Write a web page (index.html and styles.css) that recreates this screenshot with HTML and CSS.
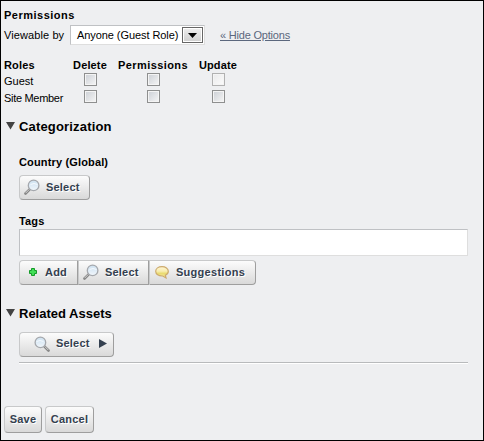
FILE: index.html
```html
<!DOCTYPE html>
<html lang="en">
<head>
<meta charset="utf-8">
<title>Permissions</title>
<link rel="stylesheet" href="styles.css">
</head>
<body>
<svg width="0" height="0" class="defs">
  <defs>
    <linearGradient id="lens" x1="0" y1="0" x2="0" y2="1"><stop offset="0" stop-color="#cfe2f0"/><stop offset=".5" stop-color="#deebf6"/><stop offset="1" stop-color="#f2f7fb"/></linearGradient>
    <linearGradient id="bubble" x1="0" y1="0" x2="0" y2="1"><stop offset="0" stop-color="#fff5d4"/><stop offset=".4" stop-color="#f8edb0"/><stop offset=".6" stop-color="#eadb70"/><stop offset="1" stop-color="#f7efa8"/></linearGradient>
    <symbol id="magnifier" viewBox="0 0 16 16">
      <path d="M6.2 9.8 1.5 14.5" stroke="#858585" stroke-width="2.6" stroke-linecap="round"/>
      <path d="M5.4 10.3 1.6 14.1" stroke="#d5d5d5" stroke-width="1"/>
      <circle cx="9.6" cy="6.4" r="5.3" fill="url(#lens)" stroke="#a5a8ad" stroke-width="1.3"/>
      <path d="M6.5 5.5q3.5-2 7 0" stroke="#f5faff" fill="none"/>
    </symbol>
  </defs>
</svg>
<form class="panel">
  <h2 class="label permissions"><span>Permissions</span></h2>
  <div class="viewable">
    <span class="by">Viewable by</span>
    <div class="select"><span>Anyone (Guest Role)</span><i class="drop"><svg width="9" height="5"><path d="M0 0h9L4.5 5z"/></svg></i></div>
    <a class="hide">« Hide Options</a>
  </div>
  <div class="roles">
    <b class="t-roles">Roles</b><b class="t-delete">Delete</b><b class="t-perm">Permissions</b><b class="t-update">Update</b>
    <span class="t-guest">Guest</span><i class="check"></i><i class="check"></i><i class="check disabled"></i>
    <span class="t-member">Site Member</span><i class="check"></i><i class="check"></i><i class="check"></i>
  </div>
  <h3 class="section categorization"><svg width="9" height="8"><path d="M0 0h9L4.5 7.5z"/></svg><span>Categorization</span></h3>
  <div class="content">
    <h4 class="label country"><span>Country (Global)</span></h4>
    <div class="button pick"><svg class="icon"><use href="#magnifier"/></svg><span class="t-select">Select</span></div>
    <h4 class="label tags"><span>Tags</span></h4>
    <div class="field"></div>
    <div class="toolbar">
      <div class="button add"><svg class="plus" width="8" height="8" viewBox="0 0 8 8"><path d="M2.5.5h3v2h2v3h-2v2h-3v-2h-2v-3h2z" fill="#42df57" stroke="#159a28"/></svg><span class="t-add">Add</span></div>
      <div class="button find"><svg class="icon"><use href="#magnifier"/></svg><span class="t-select">Select</span></div>
      <div class="button suggest"><svg class="bubble" width="14" height="13" viewBox="0 0 14 13"><path d="M7 .7c3.5 0 6.3 1.8 6.3 4.6 0 2.1-1.3 3.3-3 3.9l.7 2.7L7.8 10C3.5 10.2.7 8.2.7 5.3.7 2.5 3.5.7 7 .7z" fill="url(#bubble)" stroke="#ccaa6c" stroke-width="1.2"/></svg><span class="t-suggest">Suggestions</span></div>
    </div>
  </div>
  <h3 class="section related"><svg width="9" height="8"><path d="M0 0h9L4.5 7.5z"/></svg><span>Related Assets</span></h3>
  <div class="content assets">
    <div class="button menu"><svg class="icon mirrored"><use href="#magnifier"/></svg><span class="t-select">Select</span><svg class="arrow" width="8" height="9"><path d="M0 0v9L8 4.5z"/></svg></div>
  </div>
  <div class="actions"><div class="button save"><span>Save</span></div><div class="button cancel"><span>Cancel</span></div></div>
</form>
</body>
</html>
```

FILE: styles.css
```css
* { box-sizing: border-box; }
body { margin: 0; font: 11px/14px "Liberation Sans", Arial, sans-serif; color: #000; }
.defs { display: block; }
.panel { display: flex; flex-direction: column; width: 484px; height: 441px; border: 1px solid #000; background: #eeeff1; white-space: nowrap; }
h2, h3, h4 { margin: 0; font-weight: bold; }
.label { font-size: 11px; line-height: 14px; letter-spacing: .15px; }
.permissions { margin: 7px 0 0 3px; letter-spacing: .5px; }
.viewable { display: flex; align-items: center; height: 20px; margin: 3px 0 0 3px; }
.by { width: 66px; letter-spacing: .1px; }
.select { display: flex; align-items: center; justify-content: space-between; width: 135px; height: 20px; padding: 0 1px 0 6px; border: 1px solid #bfc1c4; border-right-color: #dedede; border-bottom-color: #dedede; background: #fff; letter-spacing: -.07px; }
.drop { display: flex; align-items: center; justify-content: center; width: 21px; height: 16px; border: 1px solid #666; box-shadow: inset 0 0 0 1px #fff; background: linear-gradient(#eee, #cfcfcf); }
.hide { margin-left: 15px; color: #5b677d; text-decoration: underline; letter-spacing: -.2px; }
.roles { display: grid; grid-template-columns: 53px 66px 60px 70px; grid-template-rows: 14px 17px 17px; align-items: center; justify-items: center; margin: 12px 0 0 3px; }
.roles b { letter-spacing: .15px; padding-top: 2px; }
.roles .t-perm { letter-spacing: .4px; }
.roles > :nth-child(4n+1) { justify-self: start; }
.t-guest, .t-member { padding-top: 2px; }
.t-member { letter-spacing: -.3px; }
.check { width: 13px; height: 13px; border: 1px solid #8e8f8f; box-shadow: inset 0 0 0 1px #f4f4f4; background: linear-gradient(135deg, #cbcfd5, #f6f6f6); }
.disabled { border-color: #b1b1b1; background: linear-gradient(135deg, #e9e9ea, #fcfcfc); }
.section { display: flex; align-items: center; height: 18px; padding-left: 5px; font-size: 13px; line-height: 18px; }
.section svg { width: 9px; margin: 0 4px 2px 0; fill: #434343; }
.categorization { margin-top: 13px; letter-spacing: .17px; }
.content { margin-left: 18px; }
.country { margin-top: 19px; }
.button { display: flex; align-items: center; height: 25px; border: 1px solid; border-color: #c8c9ca #9e9e9e #9e9e9e #c8c9ca; border-radius: 4px; background: linear-gradient(#fcfcfc, #d9d9d9); color: #34404f; font-weight: bold; text-shadow: 1px 1px #fff; padding-bottom: 2px; letter-spacing: .2px; }
.icon { width: 16px; height: 16px; flex: none; margin-top: 1px; }
.pick { width: 71px; margin-top: 6px; padding-left: 4px; }
.t-select { margin-left: 6px; }
.tags { margin-top: 14px; }
.field { width: 449px; height: 27px; margin-top: 1px; border: 1px solid #bfc1c4; border-right-color: #dedede; border-bottom-color: #dedede; background: #fff; }
.toolbar { display: flex; margin-top: 4px; }
.toolbar .button { border-radius: 0; }
.toolbar .add { width: 59px; padding-left: 9px; border-radius: 4px 0 0 4px; }
.t-add { margin-left: 8px; }
.toolbar .find { width: 71px; padding-left: 4px; }
.toolbar .suggest { width: 107px; padding-left: 5px; border-radius: 0 4px 4px 0; }
.bubble { margin-top: 2px; }
.t-suggest { margin-left: 7px; letter-spacing: .28px; }
.related { margin-top: 20px; }
.assets { width: 449px; height: 40px; border-bottom: 1px solid #b8babc; box-shadow: 0 1px #fff; padding-top: 9px; }
.menu { width: 95px; padding: 0 0 3px 14px; }
.mirrored { transform: scaleX(-1); }
.arrow { margin-left: 9px; fill: #34404f; }
.actions { display: flex; gap: 3px; margin: 43px 0 0 3px; }
.actions .button { height: 27px; justify-content: center; padding-bottom: 2px; }
.save { width: 38px; }
.cancel { width: 49px; }
```
